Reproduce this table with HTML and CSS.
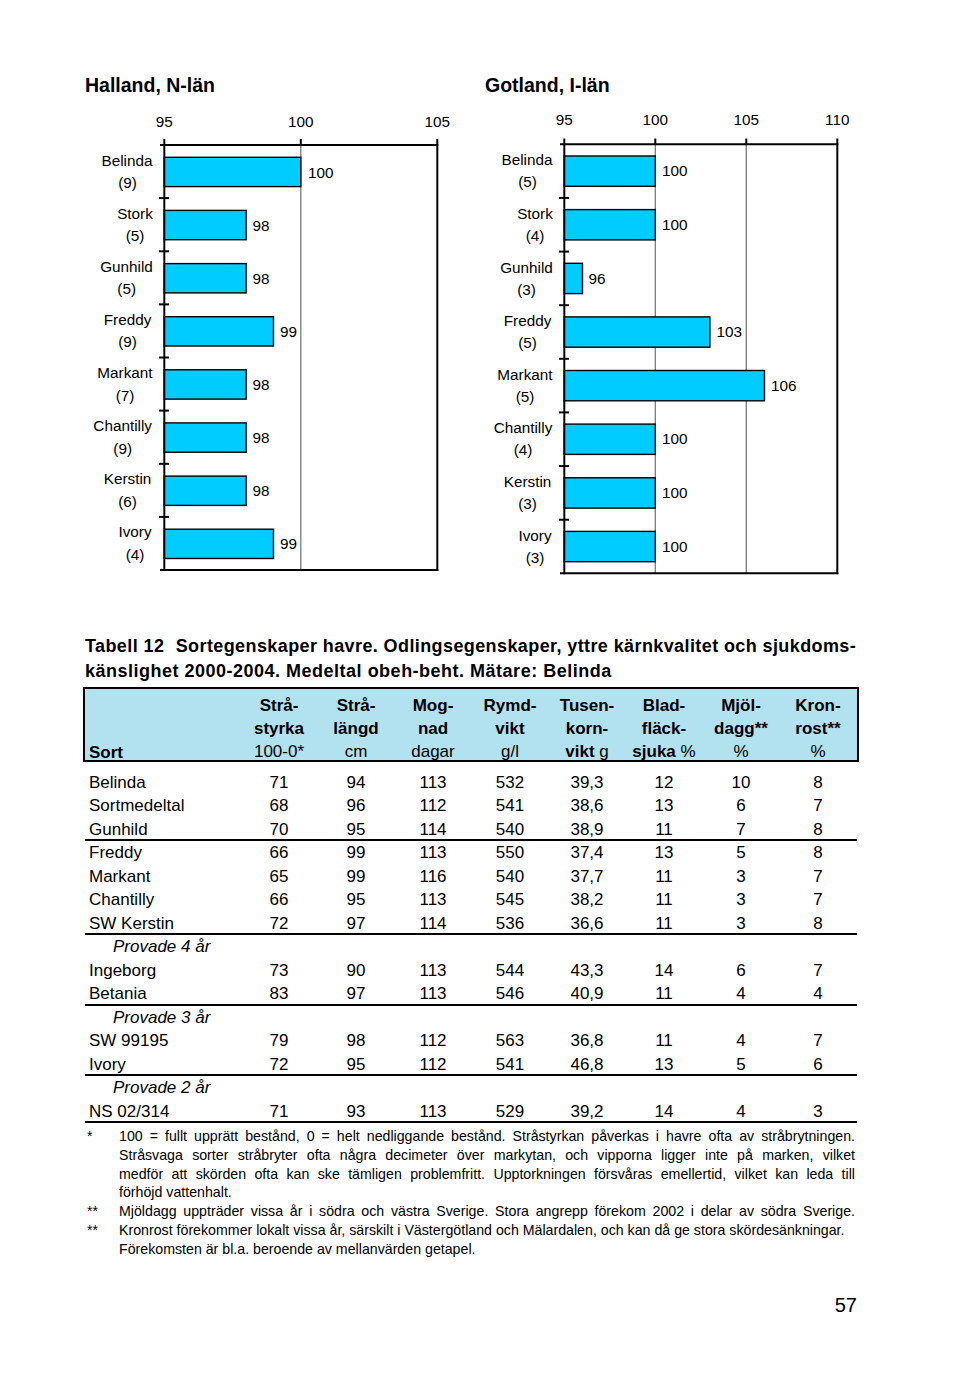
FILE: index.html
```html
<!DOCTYPE html>
<html lang="sv">
<head>
<meta charset="utf-8">
<title>Sortegenskaper havre</title>
<link rel="stylesheet" href="styles.css">
</head>
<body>
<div class="page">
  <div class="charts">
    <section class="chart">
      <h2 class="chart-title">Halland, N-län</h2>
      <svg class="plot" width="400" height="485" viewBox="85 100 400 485">
        <g class="ticklabels">
          <text x="164.3" y="127">95</text>
          <text x="300.8" y="127">100</text>
          <text x="437.3" y="127">105</text>
        </g>
        <line class="grid" x1="300.8" y1="145" x2="300.8" y2="570"/>
        <g class="bars">
          <rect x="164.3" y="157.3" width="136.5" height="29.3"/>
          <rect x="164.3" y="210.4" width="81.9" height="29.3"/>
          <rect x="164.3" y="263.6" width="81.9" height="29.3"/>
          <rect x="164.3" y="316.7" width="109.2" height="29.3"/>
          <rect x="164.3" y="369.8" width="81.9" height="29.3"/>
          <rect x="164.3" y="422.9" width="81.9" height="29.3"/>
          <rect x="164.3" y="476.1" width="81.9" height="29.3"/>
          <rect x="164.3" y="529.2" width="109.2" height="29.3"/>
        </g>
        <g class="axis">
          <line x1="160" y1="145" x2="438.3" y2="145"/>
          <line x1="160" y1="570" x2="438.3" y2="570"/>
          <line x1="164.3" y1="139" x2="164.3" y2="571"/>
          <line x1="437.3" y1="139" x2="437.3" y2="571"/>
          <line x1="300.8" y1="139" x2="300.8" y2="145"/>
          <line x1="159" y1="198.1" x2="169" y2="198.1"/>
          <line x1="159" y1="251.3" x2="169" y2="251.3"/>
          <line x1="159" y1="304.4" x2="169" y2="304.4"/>
          <line x1="159" y1="357.5" x2="169" y2="357.5"/>
          <line x1="159" y1="410.6" x2="169" y2="410.6"/>
          <line x1="159" y1="463.8" x2="169" y2="463.8"/>
          <line x1="159" y1="516.9" x2="169" y2="516.9"/>
        </g>
        <g class="values">
          <text x="308" y="177.5">100</text>
          <text x="252.5" y="230.6">98</text>
          <text x="252.5" y="283.8">98</text>
          <text x="280" y="336.9">99</text>
          <text x="252.5" y="390">98</text>
          <text x="252.5" y="443.1">98</text>
          <text x="252.5" y="496.3">98</text>
          <text x="280" y="549.4">99</text>
        </g>
        <g class="cats">
          <text x="127" y="165.5">Belinda</text><text x="127.5" y="188">(9)</text>
          <text x="135" y="218.6">Stork</text><text x="135" y="241.1">(5)</text>
          <text x="126.5" y="271.8">Gunhild</text><text x="126.7" y="294.3">(5)</text>
          <text x="127.5" y="324.9">Freddy</text><text x="127.5" y="347.4">(9)</text>
          <text x="125" y="378">Markant</text><text x="125" y="400.5">(7)</text>
          <text x="122.7" y="431.1">Chantilly</text><text x="122.7" y="453.6">(9)</text>
          <text x="127.5" y="484.3">Kerstin</text><text x="127.5" y="506.8">(6)</text>
          <text x="135" y="537.4">Ivory</text><text x="135" y="559.9">(4)</text>
        </g>
      </svg>
    </section>
    <section class="chart">
      <h2 class="chart-title">Gotland, I-län</h2>
      <svg class="plot" width="400" height="485" viewBox="485 100 400 485">
        <g class="ticklabels">
          <text x="564.3" y="124.5">95</text>
          <text x="655.3" y="124.5">100</text>
          <text x="746.3" y="124.5">105</text>
          <text x="837.3" y="124.5">110</text>
        </g>
        <line class="grid" x1="655.3" y1="144.3" x2="655.3" y2="573.3"/>
        <line class="grid" x1="746.3" y1="144.3" x2="746.3" y2="573.3"/>
        <g class="bars">
          <rect x="564.3" y="156" width="91" height="30.3"/>
          <rect x="564.3" y="209.6" width="91" height="30.3"/>
          <rect x="564.3" y="263.3" width="18.2" height="30.3"/>
          <rect x="564.3" y="316.9" width="145.6" height="30.3"/>
          <rect x="564.3" y="370.5" width="200.2" height="30.3"/>
          <rect x="564.3" y="424.1" width="91" height="30.3"/>
          <rect x="564.3" y="477.8" width="91" height="30.3"/>
          <rect x="564.3" y="531.4" width="91" height="30.3"/>
        </g>
        <g class="axis">
          <line x1="560" y1="144.3" x2="838.3" y2="144.3"/>
          <line x1="560" y1="573.3" x2="838.3" y2="573.3"/>
          <line x1="564.3" y1="138.5" x2="564.3" y2="574.3"/>
          <line x1="837.3" y1="138.5" x2="837.3" y2="574.3"/>
          <line x1="655.3" y1="138.5" x2="655.3" y2="144.3"/>
          <line x1="746.3" y1="138.5" x2="746.3" y2="144.3"/>
          <line x1="559" y1="197.9" x2="569" y2="197.9"/>
          <line x1="559" y1="251.6" x2="569" y2="251.6"/>
          <line x1="559" y1="305.2" x2="569" y2="305.2"/>
          <line x1="559" y1="358.8" x2="569" y2="358.8"/>
          <line x1="559" y1="412.4" x2="569" y2="412.4"/>
          <line x1="559" y1="466.1" x2="569" y2="466.1"/>
          <line x1="559" y1="519.7" x2="569" y2="519.7"/>
        </g>
        <g class="values">
          <text x="662" y="176.3">100</text>
          <text x="662" y="229.9">100</text>
          <text x="588.5" y="283.6">96</text>
          <text x="716.5" y="337.2">103</text>
          <text x="771" y="390.8">106</text>
          <text x="662" y="444.4">100</text>
          <text x="662" y="498.1">100</text>
          <text x="662" y="551.7">100</text>
        </g>
        <g class="cats">
          <text x="527" y="165.3">Belinda</text><text x="527.5" y="187.3">(5)</text>
          <text x="535" y="218.9">Stork</text><text x="535" y="240.9">(4)</text>
          <text x="526.5" y="272.6">Gunhild</text><text x="526.5" y="294.6">(3)</text>
          <text x="527.5" y="326.2">Freddy</text><text x="527.5" y="348.2">(5)</text>
          <text x="525" y="379.8">Markant</text><text x="525" y="401.8">(5)</text>
          <text x="523" y="433.4">Chantilly</text><text x="523" y="455.4">(4)</text>
          <text x="527.5" y="487.1">Kerstin</text><text x="527.5" y="509.1">(3)</text>
          <text x="535" y="540.7">Ivory</text><text x="535" y="562.7">(3)</text>
        </g>
      </svg>
    </section>
  </div>

  <div class="caption">
    <div class="cap-line1"><span class="cap-num">Tabell 12</span> Sortegenskaper havre. Odlingsegenskaper, yttre kärnkvalitet och sjukdoms-</div>
    <div class="cap-line2">känslighet 2000-2004. Medeltal obeh-beht. Mätare: Belinda</div>
  </div>

  <div class="thead">
    <div class="th th-sort">Sort</div>
    <div class="th">Strå-<br>styrka<br><span class="unit">100-0*</span></div>
    <div class="th">Strå-<br>längd<br><span class="unit">cm</span></div>
    <div class="th">Mog-<br>nad<br><span class="unit">dagar</span></div>
    <div class="th">Rymd-<br>vikt<br><span class="unit">g/l</span></div>
    <div class="th">Tusen-<br>korn-<br>vikt <span class="unit">g</span></div>
    <div class="th">Blad-<br>fläck-<br>sjuka <span class="unit">%</span></div>
    <div class="th">Mjöl-<br>dagg**<br><span class="unit">%</span></div>
    <div class="th">Kron-<br>rost**<br><span class="unit">%</span></div>
  </div>

  <div class="tbody">
    <div class="row"><span class="name">Belinda</span><span>71</span><span>94</span><span>113</span><span>532</span><span>39,3</span><span>12</span><span>10</span><span>8</span></div>
    <div class="row"><span class="name">Sortmedeltal</span><span>68</span><span>96</span><span>112</span><span>541</span><span>38,6</span><span>13</span><span>6</span><span>7</span></div>
    <div class="row rule"><span class="name">Gunhild</span><span>70</span><span>95</span><span>114</span><span>540</span><span>38,9</span><span>11</span><span>7</span><span>8</span></div>
    <div class="row"><span class="name">Freddy</span><span>66</span><span>99</span><span>113</span><span>550</span><span>37,4</span><span>13</span><span>5</span><span>8</span></div>
    <div class="row"><span class="name">Markant</span><span>65</span><span>99</span><span>116</span><span>540</span><span>37,7</span><span>11</span><span>3</span><span>7</span></div>
    <div class="row"><span class="name">Chantilly</span><span>66</span><span>95</span><span>113</span><span>545</span><span>38,2</span><span>11</span><span>3</span><span>7</span></div>
    <div class="row rule"><span class="name">SW Kerstin</span><span>72</span><span>97</span><span>114</span><span>536</span><span>36,6</span><span>11</span><span>3</span><span>8</span></div>
    <div class="row sub"><span class="name">Provade 4 år</span></div>
    <div class="row"><span class="name">Ingeborg</span><span>73</span><span>90</span><span>113</span><span>544</span><span>43,3</span><span>14</span><span>6</span><span>7</span></div>
    <div class="row rule"><span class="name">Betania</span><span>83</span><span>97</span><span>113</span><span>546</span><span>40,9</span><span>11</span><span>4</span><span>4</span></div>
    <div class="row sub"><span class="name">Provade 3 år</span></div>
    <div class="row"><span class="name">SW 99195</span><span>79</span><span>98</span><span>112</span><span>563</span><span>36,8</span><span>11</span><span>4</span><span>7</span></div>
    <div class="row rule"><span class="name">Ivory</span><span>72</span><span>95</span><span>112</span><span>541</span><span>46,8</span><span>13</span><span>5</span><span>6</span></div>
    <div class="row sub"><span class="name">Provade 2 år</span></div>
    <div class="row rule"><span class="name">NS 02/314</span><span>71</span><span>93</span><span>113</span><span>529</span><span>39,2</span><span>14</span><span>4</span><span>3</span></div>
  </div>

  <div class="notes">
    <div class="note">
      <span class="mark">*</span>
      <p>
        <span class="ln full">100 = fullt upprätt bestånd, 0 = helt nedliggande bestånd. Stråstyrkan påverkas i havre ofta av stråbrytningen.</span>
        <span class="ln full">Stråsvaga sorter stråbryter ofta några decimeter över markytan, och vipporna ligger inte på marken, vilket</span>
        <span class="ln full">medför att skörden ofta kan ske tämligen problemfritt. Upptorkningen försvåras emellertid, vilket kan leda till</span>
        <span class="ln">förhöjd vattenhalt.</span>
      </p>
    </div>
    <div class="note">
      <span class="mark">**</span>
      <p><span class="ln full">Mjöldagg uppträder vissa år i södra och västra Sverige. Stora angrepp förekom 2002 i delar av södra Sverige.</span></p>
    </div>
    <div class="note">
      <span class="mark">**</span>
      <p>
        <span class="ln">Kronrost förekommer lokalt vissa år, särskilt i Västergötland och Mälardalen, och kan då ge stora skördesänkningar.</span>
        <span class="ln">Förekomsten är bl.a. beroende av mellanvärden getapel.</span>
      </p>
    </div>
  </div>

  <div class="pageno">57</div>
</div>
</body>
</html>
```

FILE: styles.css
```css
html, body {
  margin: 0;
  padding: 0;
  background: #fff;
}

body {
  font-family: "Liberation Sans", Arial, sans-serif;
  color: #000;
}

.page {
  width: 960px;
  height: 1375px;
  box-sizing: border-box;
  padding: 73px 0 0 85px;
  overflow: hidden;
}

/* ---------- charts ---------- */
.charts {
  display: flex;
}

.chart {
  width: 400px;
}

.chart-title {
  margin: 0;
  font-size: 19.5px;
  line-height: 24px;
  font-weight: bold;
}

.plot {
  display: block;
  margin-top: 3px;
  font-family: "Liberation Sans", Arial, sans-serif;
  font-size: 15.3px;
  overflow: visible;
}

.plot text {
  fill: #000;
}

.plot .ticklabels text,
.plot .cats text {
  text-anchor: middle;
}

.plot .bars rect {
  fill: #00ccff;
  stroke: #000;
  stroke-width: 1.4;
}

.plot .grid {
  stroke: #7a7a7a;
  stroke-width: 1.3;
}

.plot .axis line {
  stroke: #000;
  stroke-width: 2;
}

/* ---------- caption ---------- */
.caption {
  margin-top: 49px;
  width: 770px;
  font-weight: bold;
  font-size: 18px;
  letter-spacing: 0.5px;
  line-height: 25px;
}

.cap-line1 {
  white-space: nowrap;
  text-align: justify;
  text-align-last: justify;
  letter-spacing: 0.4px;
}

.cap-num {
  margin-right: 6px;
}

/* ---------- table ---------- */
.thead,
.row {
  display: grid;
  grid-template-columns: 155.5px repeat(8, 77px);
}

.thead {
  box-sizing: border-box;
  margin: 3px 0 0 -2px;
  width: 775.5px;
  height: 75px;
  border: 2px solid #000;
  background: #b2e1ef;
  padding-top: 5px;
  font-size: 17px;
  line-height: 23px;
  font-weight: bold;
}

.th {
  text-align: center;
  white-space: nowrap;
}

.th .unit {
  font-weight: normal;
}

.th-sort {
  align-self: end;
  text-align: left;
  padding-left: 4px;
  line-height: 23px;
  margin-bottom: -1px;
}

.tbody {
  margin-top: 8.5px;
  width: 771.5px;
  font-size: 17px;
}

.row {
  height: 23.5px;
  line-height: 23.5px;
}

.row > span {
  text-align: center;
  white-space: nowrap;
}

.row > .name {
  text-align: left;
  padding-left: 4px;
}

.row.rule {
  height: 21.5px;
  border-bottom: 2px solid #000;
}

.row.sub .name {
  font-style: italic;
  padding-left: 28px;
}

/* ---------- notes ---------- */
.notes {
  margin-top: 4px;
  width: 771px;
  font-size: 14.2px;
  line-height: 18.8px;
}

.note {
  display: grid;
  grid-template-columns: 34px 736px;
}

.note .mark {
  padding-left: 2px;
}

.note p {
  margin: 0;
}

.note .ln {
  display: block;
  white-space: nowrap;
}

.note .ln.full {
  text-align: justify;
  text-align-last: justify;
}

.pageno {
  margin-top: 34px;
  width: 772px;
  text-align: right;
  font-size: 20px;
  line-height: 24px;
}
```
